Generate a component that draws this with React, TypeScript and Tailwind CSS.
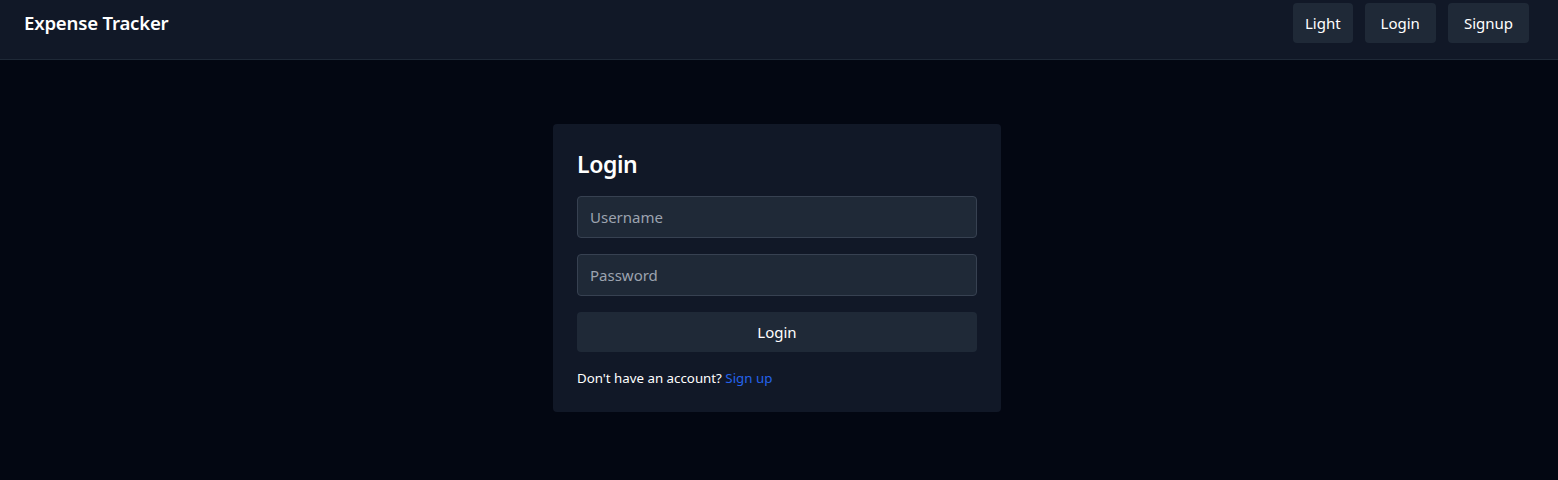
import { useState } from 'react';

const App = () => {
  const [username, setUsername] = useState('');
  const [password, setPassword] = useState('');

  return (
    <div
      className="min-h-screen bg-[#030712] text-white"
      style={{ fontFamily: '"Noto Sans", "Open Sans", sans-serif' }}
    >
      {/* top bar */}
      <header className="flex items-start justify-between bg-[#111827] border-b border-[#1f2937] pl-6 pr-[29px] pt-[3px] pb-4">
        <h1 className="text-[18.6px] font-semibold leading-[40px] tracking-[-0.2px]">Expense Tracker</h1>
        <nav className="flex gap-3 text-[15px]">
          <button className="h-10 px-3 rounded bg-[#1f2937]">Light</button>
          <button className="h-10 px-4 rounded bg-[#1f2937]">Login</button>
          <button className="h-10 px-4 rounded bg-[#1f2937]">Signup</button>
        </nav>
      </header>

      <main className="pr-1 pt-16">
        <div className="mx-auto w-[448px] rounded bg-[#111827] p-6">
          <h2 className="text-[23px] font-semibold leading-8 tracking-[-0.4px] mb-4">Login</h2>
          <div className="flex flex-col gap-4">
            <input
              type="text"
              placeholder="Username"
              value={username}
              onChange={(e) => setUsername(e.target.value)}
              className="w-full rounded border border-[#374151] bg-[#1f2937] px-3 py-2 text-[15px] leading-6 text-white placeholder:text-[#9ca3af] focus:outline-none"
            />
            <input
              type="password"
              placeholder="Password"
              value={password}
              onChange={(e) => setPassword(e.target.value)}
              className="w-full rounded border border-[#374151] bg-[#1f2937] px-3 py-2 text-[15px] leading-6 text-white placeholder:text-[#9ca3af] focus:outline-none"
            />
            <button className="w-full rounded bg-[#1f2937] py-2 text-[15px] leading-6">Login</button>
            <p className="text-[13.3px] leading-5">
              Don't have an account? <a href="#" className="text-[#2563eb]">Sign up</a>
            </p>
          </div>
        </div>
      </main>
    </div>
  );
};

export default App;
